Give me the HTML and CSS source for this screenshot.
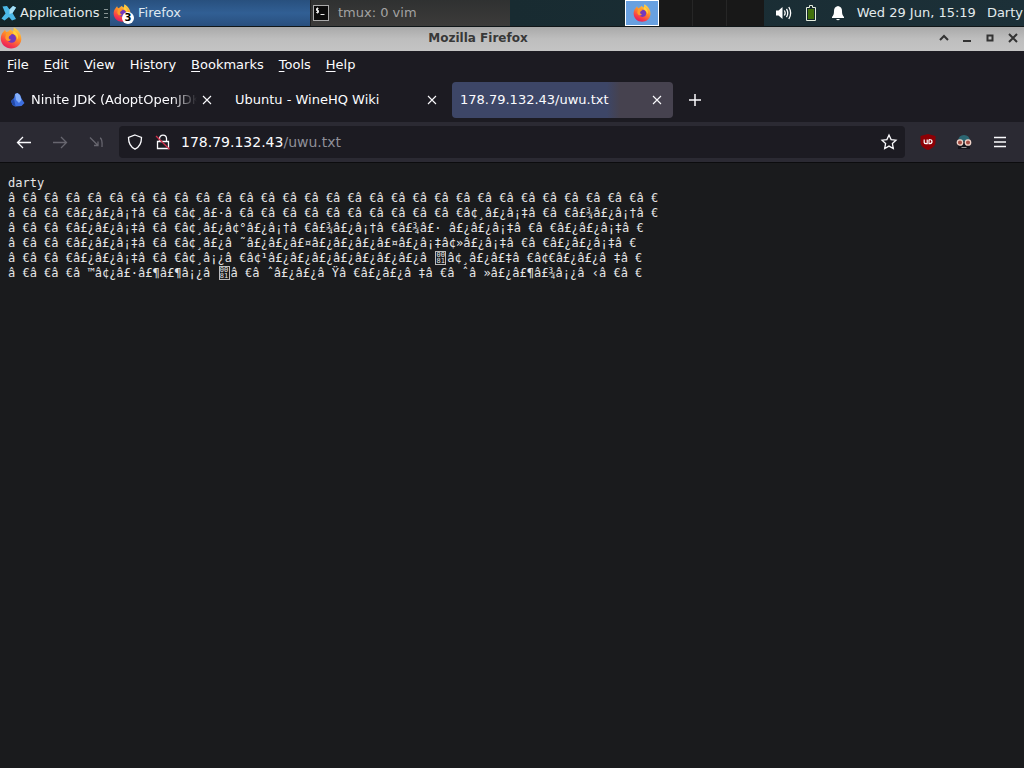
FILE: index.html
```html
<!DOCTYPE html>
<html lang="en">
<head>
<meta charset="utf-8">
<title>Mozilla Firefox</title>
<link rel="stylesheet" href="styles.css">
</head>
<body>
<svg class="defs" width="0" height="0" aria-hidden="true">
  <defs>
    <linearGradient id="flame" x1="0.8" y1="0" x2="0.3" y2="1">
      <stop offset="0" stop-color="#ffe04a"/><stop offset="0.45" stop-color="#ff8a28"/><stop offset="0.8" stop-color="#f8384c"/><stop offset="1" stop-color="#dc2060"/>
    </linearGradient>
    <symbol id="fox" viewBox="0 0 20 20">
      <path d="M3 4.5 4.5 2.5 5.6 4.6 7.5 4 9.4 2.2 12 4 12.6 0.4C16.5 2.6 19.5 6.2 19.4 11 19.2 16 15.2 19.6 10.2 19.6 5 19.6 0.8 15.6 0.7 10.7 0.7 8.2 1.5 6 3 4.5Z" fill="url(#flame)"/>
      <circle cx="10.6" cy="10.400" r="4" fill="#7438bd"/>
      <path d="M5.600 5.600C7 5 9 5.300 10.600 6.800L8.300 8.300C7.500 9.500 7.900 11.300 10 11.600 8 13.800 5 12.500 4.800 9.500Z" fill="#ff9a2c"/>
      <path d="M12.300 3C15.500 5 17.200 8 16.200 11.500 15.700 8.500 13.500 7 11.800 5.600Z" fill="#ffd43e"/>
    </symbol>
    <symbol id="cross" viewBox="0 0 12 12"><path d="M2 2 10 10M10 2 2 10" fill="none" stroke="currentColor" stroke-width="1.100"/></symbol>
    <symbol id="term" viewBox="0 0 16 16">
      <rect x="0.500" y="0.500" width="15" height="15" fill="#0c0c0c" stroke="#aaa"/>
      <path d="M5.500 3.500H3.500V5.500H5.500V7.500H3.200M4.500 2.500V8.500M7.500 9.500H11.500" fill="none" stroke="#e8e8e8"/>
    </symbol>
  </defs>
</svg>

<header class="panel">
  <button class="apps" type="button">
    <svg width="16" height="16" viewBox="0 0 16 16"><path d="M1.500 1.500 6 1 8.500 4.500 12 1 15 2.500 11.500 8 15 14 11 15.500 8 12 3.500 15.500 0.500 13.500 4.500 8.500Z" fill="#4cb9e8"/><path d="M8.500 4.500 12 1 15 2.500 11.500 8 8.500 9Z" fill="#a8e0f6"/></svg>
    <span>Applications</span>
  </button>
  <span class="handle"></span>
  <button class="task task-on" type="button">
    <span class="task-icon"><svg width="18" height="18"><use href="#fox"/></svg><b class="count">3</b></span>
    <span>Firefox</span>
  </button>
  <button class="task" type="button">
    <span class="task-icon"><svg width="16" height="16"><use href="#term"/></svg></span>
    <span>tmux: 0 vim</span>
  </button>
  <nav class="pager" aria-label="Workspaces">
    <button class="ws ws-on" type="button" aria-label="Workspace 1"><svg width="18" height="18"><use href="#fox"/></svg></button>
    <button class="ws" type="button" aria-label="Workspace 2"></button>
    <button class="ws" type="button" aria-label="Workspace 3"></button>
    <button class="ws" type="button" aria-label="Workspace 4"></button>
  </nav>
  <div class="tray">
    <svg width="16" height="16" viewBox="0 0 16 16"><path d="M0 5.500H2.500L6.500 2V14L2.500 10.500H0Z" fill="#fff"/><path d="M8.300 5.500Q10 8 8.300 10.500M10.500 3.800Q13 8 10.500 12.200M12.800 2Q16.500 8 12.800 14" fill="none" stroke="#fff" stroke-width="1.300"/></svg>
    <svg width="16" height="16" viewBox="0 0 16 16"><path d="M6.500 2.500V0.500H9.500V2.500H12.500V15.500H3.500V2.500Z" fill="#16282b" stroke="#e6eee0"/><rect x="5" y="4" width="6" height="10" fill="#41700c"/></svg>
    <svg width="16" height="16" viewBox="0 0 16 16"><path d="M8 1C11 1.500 12 3.500 12 6 12 9 12.500 10 14 12V13H2V12C3.500 10 4 9 4 6 4 3.500 5 1.500 8 1ZM6 14H10Q8 16.500 6 14Z" fill="#fff"/></svg>
  </div>
  <time class="clock">Wed 29 Jun, 15:19</time>
  <span class="user">Darty</span>
</header>

<div class="titlebar">
  <svg width="22" height="22"><use href="#fox"/></svg>
  <h1>Mozilla Firefox</h1>
  <div class="winbtns">
    <button type="button" aria-label="Roll up"><svg width="12" height="12" viewBox="0 0 12 12"><path d="M2 8 6 4 10 8"/></svg></button>
    <button type="button" aria-label="Minimize"><svg width="12" height="12" viewBox="0 0 12 12"><path d="M2 9H10"/></svg></button>
    <button type="button" aria-label="Maximize"><svg width="12" height="12" viewBox="0 0 12 12"><path d="M3.500 3.500H8.500V8.500H3.500Z"/></svg></button>
    <button type="button" aria-label="Close"><svg width="12" height="12" viewBox="0 0 12 12"><path d="M2 2 10 10M10 2 2 10"/></svg></button>
  </div>
</div>

<nav class="menubar">
  <button type="button"><u>F</u>ile</button>
  <button type="button"><u>E</u>dit</button>
  <button type="button"><u>V</u>iew</button>
  <button type="button">Hi<u>s</u>tory</button>
  <button type="button"><u>B</u>ookmarks</button>
  <button type="button"><u>T</u>ools</button>
  <button type="button"><u>H</u>elp</button>
</nav>

<div class="tabs">
  <div class="tab">
    <svg class="favicon" width="16" height="16" viewBox="0 0 16 16"><path d="M1 9 4 6 5 2 7.500 1 10 3 12 7.500 14.500 11 11.500 14 5 14.500 2.500 13Z" fill="#3d6fe0"/><path d="M1 9 4 7 5.500 14 2.500 13Z" fill="#234aa8"/><path d="M5 2 7.500 1 10 3 11.500 8 9 11 6 8Z" fill="#86b0fa"/></svg>
    <a class="tab-label fade" href="#ninite">Ninite JDK (AdoptOpenJDK)</a>
    <button type="button" aria-label="Close tab"><svg width="12" height="12"><use href="#cross"/></svg></button>
  </div>
  <div class="tab">
    <a class="tab-label" href="#wine">Ubuntu - WineHQ Wiki</a>
    <button type="button" aria-label="Close tab"><svg width="12" height="12"><use href="#cross"/></svg></button>
  </div>
  <div class="tab tab-on">
    <a class="tab-label" href="#uwu">178.79.132.43/uwu.txt</a>
    <button type="button" aria-label="Close tab"><svg width="12" height="12"><use href="#cross"/></svg></button>
  </div>
  <button class="newtab" type="button" aria-label="New tab"><svg width="14" height="14" viewBox="0 0 14 14"><path d="M7 1V13M1 7H13" stroke="currentColor" stroke-width="1.500"/></svg></button>
</div>

<div class="toolbar">
  <button type="button" aria-label="Back"><svg width="16" height="16" viewBox="0 0 16 16"><path d="M15 8.500H1.500M7 3 1.500 8.500 7 14"/></svg></button>
  <button class="dim" type="button" aria-label="Forward"><svg width="16" height="16" viewBox="0 0 16 16"><path d="M1 8.500H14.500M9 3 14.500 8.500 9 14"/></svg></button>
  <button class="dim" type="button" aria-label="Reload"><svg width="16" height="16" viewBox="0 0 16 16"><path d="M2 3.500 9.500 11M6 11.500H10V7.500M12 4Q14.500 4.500 14 13"/></svg></button>
  <div class="urlbar">
    <svg width="16" height="16" viewBox="0 0 16 16"><path d="M8 1 14.500 3.500C14.500 9.500 12.500 13 8 15.200 3.500 13 1.500 9.500 1.500 3.500Z"/></svg>
    <svg width="16" height="16" viewBox="0 0 16 16"><path d="M4.500 7V4.500Q5 1.200 8 1.200 11.300 1.200 11.500 4.500V7M2.500 7.500H13.500V14.500H2.500Z"/><path class="slash" d="M1 2 14.500 15.200"/></svg>
    <div class="address" role="textbox" tabindex="0" aria-label="Address">178.79.132.43<span>/uwu.txt</span></div>
    <button type="button" aria-label="Bookmark this page"><svg width="18" height="18" viewBox="0 0 18 18"><path d="M9 2 11.100 6.600 16 7.200 12.400 10.600 13.300 15.600 9 13.100 4.700 15.600 5.600 10.600 2 7.200 6.900 6.600Z"/></svg></button>
  </div>
  <button type="button" aria-label="uBlock Origin"><svg width="16" height="16" viewBox="0 0 16 16"><path d="M8 0 15.500 2V8C15.500 12 12 14.500 8 16 4 14.500 0.500 12 0.500 8V2Z" fill="#8c0005" stroke="none"/><path d="M4.200 5.500V8.500Q4.500 9.600 6 9.600H7.200V5.500M9 5.500V9.600H10Q12 9.500 12 7.500 12 5.500 9 5.500" stroke="#fff" stroke-width="1.200"/></svg></button>
  <button type="button" aria-label="Privacy extension"><svg width="16" height="16" viewBox="0 0 16 16"><path d="M2 7Q2.500 1 8 1T14 7Z" fill="#2c6672" stroke="none"/><path d="M2 9H14V15H2Z" fill="#15151c" stroke="none"/><circle cx="4" cy="8.500" r="2.700" fill="#a34c42" stroke="#f0d5cb"/><circle cx="12" cy="8.500" r="2.700" fill="#a34c42" stroke="#f0d5cb"/><path d="M5.500 13.500H10.500" stroke="#999" stroke-width="1"/></svg></button>
  <button type="button" aria-label="Application menu"><svg width="16" height="16" viewBox="0 0 16 16"><path d="M2 3.500H14M2 8H14M2 12.500H14"/></svg></button>
</div>

<main class="page">
<pre>darty
â €â €â €â €â €â €â €â €â €â €â €â €â €â €â €â €â €â €â €â €â €â €â €â €â €â €â €â €â €â €
â €â €â €â£¿â£¿â¡†â €â €â¢¸â£·â €â €â €â €â €â €â €â €â €â €â €â¢¸â£¿â¡‡â €â €â£¾â£¿â¡†â €
â €â €â €â£¿â£¿â¡‡â €â €â¢¸â£¿â¢°â£¿â¡†â €â£¾â£¿â¡†â €â£¾â£· â£¿â£¿â¡‡â €â €â£¿â£¿â¡‡â €
â €â €â €â£¿â£¿â¡‡â €â €â¢¸â£¿â ˜â£¿â£¿â£¤â£¿â£¿â£¿â£¤â£¿â¡‡â¢»â£¿â¡‡â €â €â£¿â£¿â¡‡â €
â €â €â €â£¿â£¿â¡‡â €â €â¢¸â¡¿â €â¢¹â£¿â£¿â£¿â£¿â£¿â£¿â£¿â <span class="hex"><span>00</span><span>81</span></span>â¢¸â£¿â£‡â €â¢€â£¿â£¿â ‡â €
â €â €â €â ™â¢¿â£·â£¶â£¶â¡¿â <span class="hex"><span>00</span><span>81</span></span>â €â ˆâ£¿â£¿â Ÿâ €â£¿â£¿â ‡â €â ˆâ »â£¿â£¶â£¾â¡¿â ‹â €â €</pre>
</main>
</body>
</html>
```
FILE: styles.css
```css
* { box-sizing: border-box; }

body {
  margin: 0;
  min-height: 100vh;
  display: flex;
  flex-direction: column;
  background: #1a1b1d;
  color: #fbfbfe;
  font: 13px/16px "DejaVu Sans", sans-serif;
}

button {
  margin: 0;
  padding: 0;
  border: 0;
  background: none;
  color: inherit;
  font: inherit;
}

svg { display: block; flex: none; }
.defs { position: absolute; }

/* Desktop panel */
.panel {
  display: flex;
  align-items: stretch;
  height: 27px;
  background: linear-gradient(90deg, #14262a, #1c3038);
  border-bottom: 1px solid #101618;
  white-space: nowrap;
}
.apps {
  display: flex;
  align-items: center;
  gap: 3px;
  padding-left: 1px;
  width: 103px;
  color: #e6ecec;
}
.handle {
  width: 4px;
  height: 9px;
  margin: 9px 2px 0 1px;
  background: repeating-linear-gradient(#889494 0 1px, transparent 1px 4px);
}
.task {
  display: flex;
  align-items: center;
  gap: 7px;
  flex: 0 1 200px;
  padding-left: 2px;
  background: linear-gradient(#2f3131, #3c3b3a);
  color: #a3a3a3;
  border-left: 1px solid #202020;
}
.task-on {
  background: linear-gradient(#28507e, #315f94 50%, #294f7e);
  color: #dfe8f0;
  padding-left: 3px;
  border-left: 0;
}
.task-icon { position: relative; width: 18px; }
.count {
  position: absolute;
  left: 9px;
  top: 8px;
  width: 12px;
  height: 12px;
  border-radius: 50%;
  background: #fff;
  color: #000;
  font-size: 10px;
  line-height: 12px;
}
.pager {
  display: flex;
  margin-left: auto;
  background: #181818;
}
.ws {
  width: 34px;
  border-right: 1px solid #262626;
  display: grid;
  place-items: center;
}
.ws:last-child { border-right: 0; width: 37px; }
.ws-on { background: #68a0e0; border: 1px solid #fff; }
.tray {
  display: flex;
  align-items: center;
  gap: 11px;
  padding: 0 11px 0 12px;
}
.clock, .user { align-self: center; color: #e2eaec; }
.user { padding: 0 1px 0 11px; }

/* Window frame */
.titlebar {
  display: flex;
  align-items: center;
  height: 24px;
  background: linear-gradient(#a9a9a9, #bebebe 50%, #c4c4c4);
  color: #383838;
}
.titlebar h1 {
  flex: 1;
  margin: 0;
  padding: 0 4px 2px 0;
  text-align: center;
  font-size: 12px;
  line-height: 16px;
}
.winbtns { display: flex; gap: 11px; padding: 0 5px 2px 0; }
.titlebar > svg { margin-bottom: 2px; }
.winbtns path { fill: none; stroke: #333; stroke-width: 2; }

.menubar {
  display: flex;
  gap: 15px;
  height: 27px;
  padding-left: 7px;
  background: #1c1b22;
}
.menubar u { text-underline-offset: 2px; }

/* Tabs */
.tabs {
  display: flex;
  gap: 4px;
  padding: 4px 2px;
  background: #1c1b22;
}
.tab {
  display: flex;
  align-items: center;
  flex: 0 1 221px;
  min-width: 0;
  height: 36px;
  padding: 0 10px 0 8px;
  border-radius: 4px;
}
.tab-on { background: linear-gradient(90deg, #3d4667 70%, #46424f 76%); }
.favicon { margin-right: 5px; }
.tab-label {
  flex: 1;
  overflow: hidden;
  white-space: nowrap;
  color: inherit;
  text-decoration: none;
}
.fade {
  margin-right: 4px;
  -webkit-mask-image: linear-gradient(90deg, #000 85%, transparent);
  mask-image: linear-gradient(90deg, #000 85%, transparent);
}
.newtab { width: 36px; display: grid; place-items: center; }

/* Navigation */
.toolbar {
  display: flex;
  align-items: center;
  height: 41px;
  padding: 0 6px;
  background: #2b2a33;
  border-bottom: 1px solid #0c0c0e;
}
.toolbar > button { width: 36px; display: grid; place-items: center; }
.toolbar svg { fill: none; stroke: #fbfbfe; stroke-width: 1.3; }
.toolbar .dim svg { stroke: #67666f; }
.urlbar {
  display: flex;
  align-items: center;
  flex: 1;
  height: 32px;
  margin: 0 5px;
  padding: 0 7px 0 8px;
  gap: 12px;
  border-radius: 4px;
  background: #1c1b22;
}
.toolbar .slash { stroke: #d2304c; }
.address { flex: 1; font-size: 14px; margin-left: -2px; }
.address span { color: #8f8f98; }

/* Plain text document */
.page { flex: 1; padding: 13px 8px; }
.page pre {
  margin: 0;
  color: #e6e6e6;
  font: 12px/15px "DejaVu Sans Mono", monospace;
}
.hex {
  display: inline-flex;
  flex-direction: column;
  align-items: center;
  justify-content: center;
  width: 11px;
  height: 14px;
  margin: 0 1px;
  border: 1px solid #bbb;
  font: 7px/6px "DejaVu Sans Mono", monospace;
  vertical-align: top;
}
```
